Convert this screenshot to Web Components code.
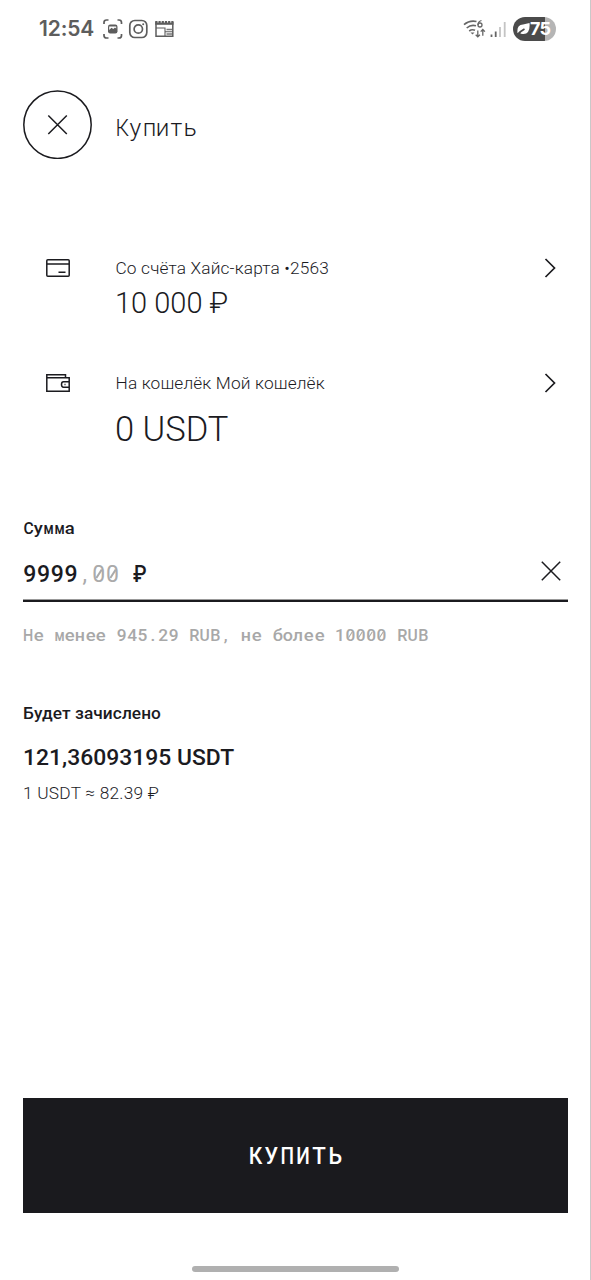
<!DOCTYPE html>
<html lang="ru">
<head>
<meta charset="utf-8">
<title>Купить</title>
<style>
html,body{margin:0;height:100%;background:#fff}
body{font-family:Roboto,"Noto Sans",sans-serif;color:#1b1b1f;overflow:hidden}
</style>
</head>
<body>
<buy-screen></buy-screen>
<script>
const define = (name, html, setup) => customElements.define(name, class extends HTMLElement {
  connectedCallback() {
    if (this.shadowRoot) return;
    const t = document.createElement('template');
    t.innerHTML = html;
    this.attachShadow({mode: 'open'}).append(t.content.cloneNode(true));
    if (setup) setup(this, this.shadowRoot);
  }
});

// Fixed-pitch text: every glyph sits in a cell of equal width, wide glyphs are condensed.
define('mono-text', `<style>
:host{display:inline-flex;white-space:pre}
span{display:inline-flex;justify-content:center;position:relative;flex:none}
b{font-weight:inherit;display:block;flex:none}
.zero::after{content:"";position:absolute;left:50%;top:50%;width:.42em;height:.075em;margin:-.045em 0 0 -.21em;background:currentColor;transform:rotate(-57deg)}
</style>`, (host, root) => {
  const cell = +host.getAttribute('cell');
  for (const ch of host.getAttribute('text')) {
    const s = document.createElement('span'), b = document.createElement('b');
    b.textContent = ch; s.style.width = cell + 'px';
    if (ch === '0') s.className = 'zero';
    s.append(b); root.append(s);
    const size = parseFloat(getComputedStyle(host).fontSize), max = size * .59, w = b.getBoundingClientRect().width;
    const k = Math.min(/[a-zа-яА-Я]/i.test(ch) ? 1.07 : 1, max / w);
    if (k !== 1) b.style.transform = `scaleX(${k})`;
  }
});

define('status-bar', `<style>
:host{display:flex;height:58px;box-sizing:border-box;padding:0 34px 0 39px;align-items:center;color:#5d5d5d}
.time{font:600 21px/30px Inter,Roboto,sans-serif;width:63px;white-space:nowrap;letter-spacing:-.15px}
.i{display:block;flex:none}.sp{flex:1}
.bat{width:43px;height:24px;border-radius:12px;background:linear-gradient(90deg,#4b4b4b 75%,#b5b5b5 75%);display:flex;align-items:center;box-sizing:border-box;padding-left:4px;color:#fff;font:700 18px/24px Inter,Roboto,sans-serif;letter-spacing:-.8px}
</style>
<div class="time">12:54</div>
<svg class="i" width="74" height="22" viewBox="0 0 74 22" fill="none" stroke="#5d5d5d" stroke-width="1.7">
<path d="M2 6V4.500Q2 2 4.500 2H6.500M15.500 2h1.500q2.500 0 2.500 2.500V6M19.500 16v1.500q0 2.500-2.500 2.500h-1.500M6.500 20H4.500q-2.500 0-2.500-2.500V16"/>
<rect x="6" y="6.500" width="9.500" height="9" rx="2.200" fill="#5d5d5d" stroke="none"/><path d="M7.200 12v-3.500h7v2l-1.200-.9-1.700 1.500-1.800-1.300z" fill="#fff" stroke="none"/>
<rect x="27.800" y="2.500" width="17" height="17" rx="5"/><circle cx="36.300" cy="11" r="4.200"/><circle cx="41.200" cy="6.300" r="1" fill="#5d5d5d" stroke="none"/>
<path d="M54 4v14.300h16.800V4" stroke-width="1.500"/><path d="M53.200 3h18.300v3.800h-18.300z" fill="#5d5d5d" stroke="none"/><path d="M56 2v2.600M59.200 2v2.600M62.400 2v2.600M65.600 2v2.600M68.800 2v2.600" stroke="#fff" stroke-width="1"/>
<path d="M54 10h9M63 9.500v8.500M63 13.700h8" stroke-width="1.100"/><path d="M64.500 11.500h5.500M64.500 16h5.500" stroke="#777" stroke-width="1.300"/></svg>
<div class="sp"></div>
<svg class="i" width="50" height="24" viewBox="0 0 50 24" fill="none" stroke="#666" stroke-width="1.600">
<path d="M1 7.700Q6.500 3 13.500 4.500M3.700 11Q8 7.200 13 8.800M6.200 14Q9 11.800 12 13.300"/><path d="M7.500 15.500l2 2 2-2z" fill="#666" stroke="none"/>
<path d="M18.500 3.500Q15 4.500 15 8" stroke-width="1.300"/><circle cx="17" cy="8" r="2" stroke-width="1.300"/>
<path d="M14.800 13.500v6.300M12.700 17.700l2.100 2.100 2.100-2.100M19.800 18.800v-6.300M17.700 14.600l2.100-2.100 2.100 2.100" stroke-width="1.300"/>
<path d="M28.500 17.500v2.500M32.700 14.500v5.500" stroke-width="1.800"/><path d="M37 10v10M41.700 5v15" stroke="#c4c4c4" stroke-width="1.800"/></svg>
<div class="bat"><svg class="i" width="13" height="14" viewBox="0 0 13 14"><path d="M.5 11Q-.5 3 6 2.500L12.500 1Q13.500 12 6.500 12 4 12.300 3 11z" fill="#fff"/><path d="M0 13Q3 9.500 7.500 7" stroke="#4b4b4b" stroke-width="1.800" fill="none"/></svg><span>75</span></div>`);

define('screen-header', `<style>
:host{display:flex;height:70px;margin-top:32px;padding-left:23px}
button{width:69px;height:69px;border:0;border-radius:50%;background:none;padding:0}
svg{display:block}
.t{margin-left:23px;font-size:23px;font-weight:300;line-height:40px;padding-top:19px}
</style><button aria-label="Закрыть"><svg width="69" height="69" viewBox="0 0 69 69" fill="none" stroke="#1b1b1f" stroke-width="1.500"><circle cx="34.500" cy="34.700" r="33.700"/><path d="M25.300 25.500l18.500 18.500M43.800 25.500L25.300 44"/></svg></button><div class="t"><slot></slot></div>`);

define('account-row', `<style>
:host{display:grid;grid-template-columns:92px 1fr 35px;padding:0 11px 0 23px}
.icon{padding:5px 0 0 23px}.go{padding-top:3px}
svg{display:block}
.l{font-size:17.300px;line-height:28px;font-weight:300;white-space:nowrap;letter-spacing:.15px;padding-left:.5px}
.v{font-weight:300;white-space:nowrap}
</style><div class="icon"><slot name="icon"></slot></div><div><div class="l"><slot name="label"></slot></div><div class="v"><slot></slot></div></div>
<svg class="go" width="12" height="22" viewBox="0 0 12 22"><path d="M1.500 2l9 9-9 9" fill="none" stroke="#1b1b1f" stroke-width="1.700"/></svg>`);

define('amount-field', `<style>
:host{display:block;margin:0 22px 0 23px}
.l{font-size:17.300px;font-weight:500;line-height:24px;height:24px}
.f{display:flex;align-items:center;height:47px;margin-top:13px;border-bottom:2px solid #1b1b1f;box-shadow:inset 0 -1px #999;box-sizing:content-box}
.v{flex:1;display:flex;font-size:23px;font-weight:500;line-height:30px;margin-top:-4px}
.dim{color:#aaa;font-weight:400}
svg{margin-right:7.500px;margin-top:-11px}
.h{color:#a8a8a8;font-size:17.300px;font-weight:500;line-height:24px;margin-top:21px;display:flex}
</style><div class="l"><mono-text text="Сумма" cell="10.4"></mono-text></div>
<div class="f"><div class="v"><mono-text text="9999" cell="13.75"></mono-text><mono-text class="dim" text=",00" cell="13.75"></mono-text><mono-text text=" ₽" cell="13.75"></mono-text></div>
<svg width="20" height="20" viewBox="0 0 20 20"><path d="M.8 .8l18.400 18.400M19.200 .8L.8 19.200" stroke="#1b1b1f" stroke-width="1.500"/></svg></div>
<div class="h"><mono-text text="Не менее 945.29 RUB, не более 10000 RUB" cell="10.4"></mono-text></div>`);

define('credit-summary', `<style>
:host{display:block;margin:54px 23px 0;white-space:nowrap}
.a{font-size:17.300px;line-height:24px;font-weight:500;letter-spacing:.07px}
.b{font-size:22.900px;line-height:32px;font-weight:500;margin-top:17px}
.c{font-size:17.300px;line-height:24px;font-weight:300;margin-top:7px;letter-spacing:.23px}
</style><div class="a">Будет зачислено</div><div class="b">121,36093195 USDT</div><div class="c">1 USDT ≈ 82.39 ₽</div>`);

define('buy-button', `<style>
:host{display:block;margin:auto 22px 0 23px}
button{display:flex;justify-content:center;align-items:center;width:100%;height:115px;border:0;padding:2px 0 0;background:#1a1a1e;color:#fff;font:500 23px/40px Roboto,sans-serif}
</style><button><slot></slot></button>`);

define('buy-screen', `<style>
:host{display:flex;flex-direction:column;width:591px;height:1280px;box-sizing:border-box;border-right:1px solid #c9c9c9;background:#fff}
.r1{margin-top:94px}.r2{margin-top:46px}
.n1{display:block;font-size:29px;line-height:40px;padding-top:1px}.n2{font-size:34.500px;line-height:48px;display:block;padding-top:8px}
amount-field{margin-top:63px}
.home{width:207px;height:6px;border-radius:3px;background:#b0b0b0;margin:53px auto 8px;flex:none}
svg{display:block}
</style>
<status-bar></status-bar>
<screen-header><mono-text text="Купить" cell="13.7"></mono-text></screen-header>
<account-row class="r1"><svg slot="icon" width="24" height="18" viewBox="0 0 24 18" fill="none" stroke="#1b1b1f" stroke-width="1.500"><rect x=".8" y=".8" width="22.400" height="16.400" rx="1"/><path d="M1 5h22M12.500 13.300h7"/></svg><span slot="label">Со счёта Хайс-карта •2563</span><span class="n1">10 000 ₽</span></account-row>
<account-row class="r2"><svg slot="icon" width="24" height="18" viewBox="0 0 24 18" fill="none" stroke="#1b1b1f" stroke-width="1.500"><path d="M19.500 3.700V.8H.8v16.400h22.400V3.700H.8M23 7.800h-5.500q-2 0-2 2.700t2 2.700H23M18.500 10.500h1"/></svg><span slot="label">На кошелёк Мой кошелёк</span><span class="n2">0 USDT</span></account-row>
<amount-field></amount-field>
<credit-summary></credit-summary>
<buy-button><mono-text text="КУПИТЬ" cell="15.9"></mono-text></buy-button>
<div class="home"></div>`);
</script>
</body>
</html>
